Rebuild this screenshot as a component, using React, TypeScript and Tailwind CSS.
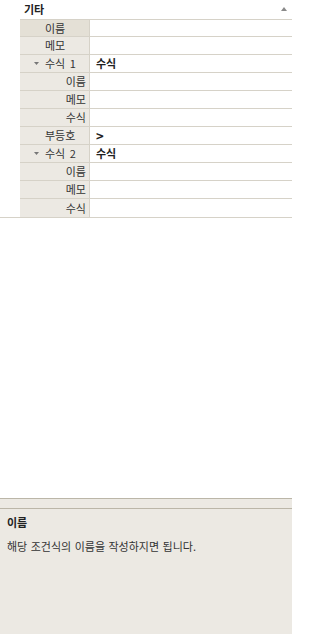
import React from "react";

type Row = { label: string; kind: "top" | "group" | "sub"; value?: string; selected?: boolean; bold?: boolean };

const rows: Row[] = [
  { label: "이름", kind: "top", selected: true },
  { label: "메모", kind: "top" },
  { label: "수식 1", kind: "group", value: "수식" },
  { label: "이름", kind: "sub" },
  { label: "메모", kind: "sub" },
  { label: "수식", kind: "sub" },
  { label: "부등호", kind: "top", value: ">", bold: true },
  { label: "수식 2", kind: "group", value: "수식" },
  { label: "이름", kind: "sub" },
  { label: "메모", kind: "sub" },
  { label: "수식", kind: "sub" },
];

export default function App() {
  return (
    <div
      className="w-[292px] h-[634px] flex flex-col bg-white text-[#333] text-[11px] leading-none"
      style={{ fontFamily: '"Noto Sans CJK KR", "Noto Sans", sans-serif' }}
    >
      <div className="h-[19px] flex items-center justify-between pl-[24px] pr-[5px] font-bold text-[#222]">
        <span>기타</span>
        <svg width="6" height="5" viewBox="0 0 6 5">
          <path d="M3 0 L6 4 L0 4 Z" fill="#8a8a8a" />
        </svg>
      </div>
      <div className="flex flex-col border-b border-[#d6d2c8]">
        {rows.map((r, i) => (
          <div key={i} className="flex h-[18px]">
            <div className="w-[20px]" />
            <div
              className={`w-[70px] flex items-center border-r border-[#d6d2c8] ${
                i < rows.length - 1 ? "border-b" : ""
              } border-b-[#d6d2c8] ${r.selected ? "bg-[#e4e0d6]" : "bg-[#ece9e3]"} ${
                r.kind === "sub" ? "justify-end pr-[3px]" : r.kind === "group" ? "pl-[14px]" : "pl-[25px]"
              } ${i === 0 ? "border-t border-t-[#d6d2c8]" : ""}`}
            >
              {r.kind === "group" && (
                <svg width="5" height="4" viewBox="0 0 5 4" className="mr-[6px]">
                  <path d="M0 0 L5 0 L2.5 3 Z" fill="#777" />
                </svg>
              )}
              <span className="text-[#333] [word-spacing:2px]">{r.label}</span>
            </div>
            <div
              className={`flex-1 flex items-center pl-[6px] ${
                i < rows.length - 1 ? "border-b border-b-[#d6d2c8]" : ""
              } ${i === 0 ? "border-t border-t-[#d6d2c8]" : ""} font-bold text-[#222]`}
            >
              {r.bold ? <span className="text-[13px] font-bold">{r.value}</span> : r.value}
            </div>
          </div>
        ))}
      </div>
      <div className="flex-1" />
      <div className="h-[136px] flex flex-col bg-[#ece9e3]">
        <div className="h-[11px] border-t border-[#bbb6a8] border-b" />
        <div className="px-[7px] pt-[8px] flex flex-col gap-[13px]">
          <span className="font-bold text-[#222]">이름</span>
          <span className="text-[#333] [word-spacing:1px]">해당 조건식의 이름을 작성하지면 됩니다.</span>
        </div>
      </div>
    </div>
  );
}
